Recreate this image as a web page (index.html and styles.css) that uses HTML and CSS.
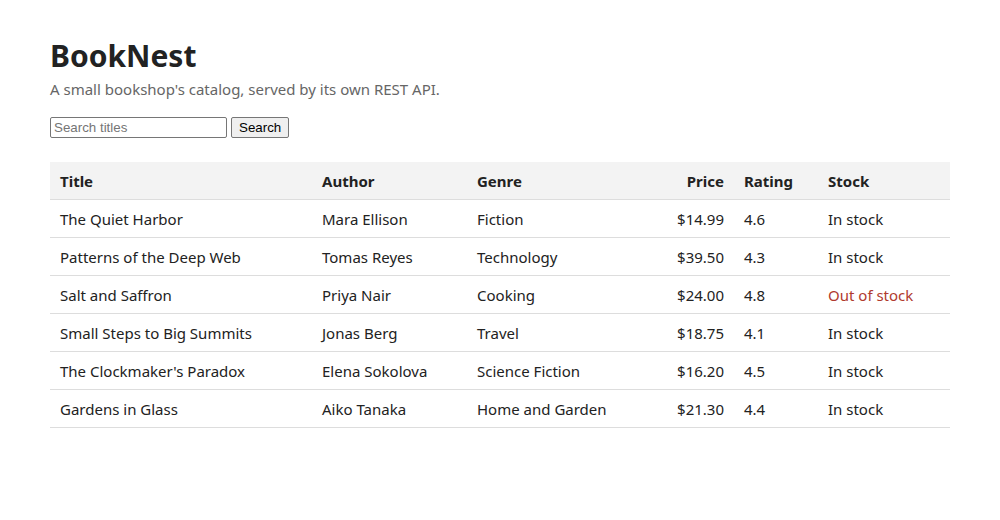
FILE: index.html
```html
<!DOCTYPE html>
<html lang="en">
<head>
<meta charset="utf-8">
<title>BookNest</title>
<link rel="stylesheet" href="styles.css">
</head>
<body>
<main class="page">
  <h1 class="brand">BookNest</h1>
  <p class="tagline">A small bookshop's catalog, served by its own REST API.</p>
  <form class="search">
    <input class="search-input" type="text" placeholder="Search titles">
    <button class="search-btn" type="button">Search</button>
  </form>
  <table class="catalog">
    <colgroup>
      <col class="c-title"><col class="c-author"><col class="c-genre"><col class="c-price"><col class="c-rating"><col class="c-stock">
    </colgroup>
    <thead>
      <tr><th>Title</th><th>Author</th><th>Genre</th><th class="num">Price</th><th>Rating</th><th>Stock</th></tr>
    </thead>
    <tbody>
      <tr><td>The Quiet Harbor</td><td>Mara Ellison</td><td>Fiction</td><td class="num">$14.99</td><td>4.6</td><td>In stock</td></tr>
      <tr><td>Patterns of the Deep Web</td><td>Tomas Reyes</td><td>Technology</td><td class="num">$39.50</td><td>4.3</td><td>In stock</td></tr>
      <tr><td>Salt and Saffron</td><td>Priya Nair</td><td>Cooking</td><td class="num">$24.00</td><td>4.8</td><td class="out">Out of stock</td></tr>
      <tr><td>Small Steps to Big Summits</td><td>Jonas Berg</td><td>Travel</td><td class="num">$18.75</td><td>4.1</td><td>In stock</td></tr>
      <tr><td>The Clockmaker's Paradox</td><td>Elena Sokolova</td><td>Science Fiction</td><td class="num">$16.20</td><td>4.5</td><td>In stock</td></tr>
      <tr><td>Gardens in Glass</td><td>Aiko Tanaka</td><td>Home and Garden</td><td class="num">$21.30</td><td>4.4</td><td>In stock</td></tr>
    </tbody>
  </table>
</main>
</body>
</html>
```

FILE: styles.css
```css
html, body {
  margin: 0;
  padding: 0;
  background: #fff;
}
body {
  font-family: "Segoe UI", "Noto Sans", "Open Sans", sans-serif;
  color: #222;
}
.page {
  width: 900px;
  padding: 24px 50px;
}
.brand {
  margin: 14px 0 0;
  font-size: 30px;
  font-weight: 700;
  line-height: 36px;
  color: #222;
}
.tagline {
  margin: 5px 0 18px;
  font-size: 15px;
  line-height: 20px;
  color: #666;
}
.search {
  display: flex;
  gap: 4px;
  margin: 0 0 24px;
}
.search-input {
  width: 177px;
  height: 21px;
  box-sizing: border-box;
  border: 1px solid #767676;
  border-radius: 2px;
  padding: 1px 3px;
  font-family: "Liberation Sans", Arial, sans-serif;
  font-size: 13.33px;
}
.search-input::placeholder { color: #757575; }
.search-btn {
  height: 21px;
  box-sizing: border-box;
  border: 1px solid #767676;
  border-radius: 2px;
  background: #efefef;
  padding: 1px 7px;
  font-family: "Liberation Sans", Arial, sans-serif;
  font-size: 13.33px;
  color: #000;
}
.catalog {
  width: 900px;
  border-collapse: collapse;
  table-layout: fixed;
  font-size: 15px;
}
.c-title { width: 262px; }
.c-author { width: 155px; }
.c-genre { width: 193px; }
.c-price { width: 74px; }
.c-rating { width: 84px; }
.c-stock { width: 132px; }
.catalog th, .catalog td {
  text-align: left;
  padding: 9px 10px 7px;
  line-height: 21px;
  border-bottom: 1px solid #ddd;
  white-space: nowrap;
}
.catalog th {
  background: #f3f3f3;
  font-weight: 700;
}
.catalog .num { text-align: right; }
.catalog .out { color: #b03a2e; }
```
